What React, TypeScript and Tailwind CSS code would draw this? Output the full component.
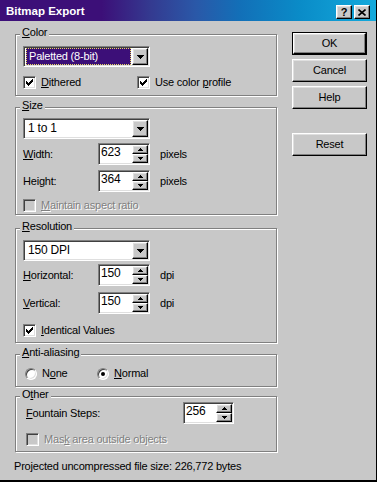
import type { ReactNode } from 'react';

const raised =
  'border border-t-white border-l-white border-r-black border-b-black shadow-[inset_-1px_-1px_0_#808080,inset_1px_1px_0_#dfdfdf] bg-[#c8c8c8]';
const sunken =
  'border border-t-[#808080] border-l-[#808080] border-r-white border-b-white shadow-[inset_1px_1px_0_#404040,inset_-1px_-1px_0_#dfdfdf]';
const dim = 'text-[#808080] [text-shadow:1px_1px_0_#fff]';

// classic 7x7 check glyph
const CHECK = ['......#', '.....##', '#...###', '##.###.', '#####..', '.###...', '..#....'];

function CheckMark() {
  return (
    <svg className="absolute left-[2px] top-[2px]" width="7" height="7" shapeRendering="crispEdges">
      {CHECK.map((row, y) =>
        row.split('').map((c, x) => (c === '#' ? <rect key={`${x}-${y}`} x={x} y={y} width="1" height="1" fill="#000" /> : null))
      )}
    </svg>
  );
}

function Checkbox({ checked, disabled, children }: { checked?: boolean; disabled?: boolean; children: ReactNode }) {
  return (
    <div className="flex items-center">
      <span className={`relative inline-block h-[13px] w-[13px] shrink-0 ${sunken} ${disabled ? 'bg-[#c8c8c8]' : 'bg-white'}`}>
        {checked && <CheckMark />}
      </span>
      <span className={`ml-[5px] ${disabled ? dim : ''}`}>{children}</span>
    </div>
  );
}

function Radio({ on, children }: { on?: boolean; children: ReactNode }) {
  return (
    <div className="flex items-center">
      <span className={`relative inline-block h-[12px] w-[12px] shrink-0 rounded-full bg-white ${sunken}`}>
        {on && <span className="absolute left-[3px] top-[3px] h-[4px] w-[4px] rounded-full bg-black" />}
      </span>
      <span className="ml-[5px]">{children}</span>
    </div>
  );
}

function Arrow() {
  return (
    <svg width="7" height="4" shapeRendering="crispEdges">
      <path d="M0 0h7v1h-7zM1 1h5v1h-5zM2 2h3v1h-3zM3 3h1v1h-1z" fill="#000" />
    </svg>
  );
}

function Combo({ text, focused }: { text: string; focused?: boolean }) {
  return (
    <div className={`flex h-[21px] w-[127px] bg-white p-[1px] ${sunken}`}>
      <div className="flex min-w-0 flex-1 items-center pl-[1px] pr-[1px]">
        {focused ? (
          <div className="flex h-[17px] w-full items-center border border-dotted border-[#e8d860] bg-[#3c0f78] pl-[2px] text-white">
            {text}
          </div>
        ) : (
          <span className="pl-[2px] text-[12px]">{text}</span>
        )}
      </div>
      <div className={`flex h-[17px] w-[16px] items-center justify-center ${raised}`}>
        <Arrow />
      </div>
    </div>
  );
}

function Spin({ value, w = 'w-[52px]' }: { value: string; w?: string }) {
  return (
    <div className={`flex h-[22px] ${w} bg-white p-[1px] ${sunken}`}>
      <div className="flex-1 pl-[1px] text-[12px] leading-[14px]">{value}</div>
      <div className="flex w-[16px] flex-col">
        <div className={`flex h-[9px] items-center justify-center ${raised}`}>
          <svg width="5" height="3" shapeRendering="crispEdges">
            <path d="M2 0h1v1h-1zM1 1h3v1h-3zM0 2h5v1h-5z" fill="#000" />
          </svg>
        </div>
        <div className={`flex h-[9px] items-center justify-center ${raised}`}>
          <svg width="5" height="3" shapeRendering="crispEdges">
            <path d="M0 0h5v1h-5zM1 1h3v1h-3zM2 2h1v1h-1z" fill="#000" />
          </svg>
        </div>
      </div>
    </div>
  );
}

function Group({ label, className, children }: { label: ReactNode; className: string; children: ReactNode }) {
  return (
    <div className={`relative border border-[#808080] shadow-[inset_1px_1px_0_#fff,1px_1px_0_#fff] ${className}`}>
      <span className="absolute -top-[9px] left-[4px] bg-[#c8c8c8] px-[2px] leading-[13px]">{label}</span>
      {children}
    </div>
  );
}

function Btn({ children, def, className = '' }: { children: ReactNode; def?: boolean; className?: string }) {
  if (def) {
    return (
      <div className={`h-[23px] w-[75px] border border-black ${className}`}>
        <div className={`flex h-full items-center justify-center ${raised}`}>{children}</div>
      </div>
    );
  }
  return <div className={`flex h-[23px] w-[75px] items-center justify-center ${raised} ${className}`}>{children}</div>;
}

export default function App() {
  return (
    <div className="flex h-[482px] w-[377px] flex-col border-b-2 border-r border-b-black border-r-black bg-[#c8c8c8] font-['Liberation_Sans',Arial,sans-serif] text-[11px] leading-[13px] tracking-[-0.2px] text-black">
      {/* Title bar */}
      <div className="flex h-[21px] shrink-0 items-start bg-[linear-gradient(90deg,#3c0f78_0%,#3c0f78_27%,#343a90_40%,#2a58a8_52%,#1270b8_64%,#0a8cc8_80%,#14aadc_100%)]">
        <span className="ml-[6px] text-[11.5px] font-bold leading-[22px] tracking-normal text-white">Bitmap Export</span>
        <div className="ml-auto mr-[6px] mt-[5px] flex gap-[2px]">
          <div className={`flex h-[14px] w-[16px] items-center justify-center text-[11px] font-bold leading-none ${raised}`}>?</div>
          <div className={`flex h-[14px] w-[16px] items-center justify-center ${raised}`}>
            <svg width="8" height="7" viewBox="0 0 8 7">
              <path d="M0.5 0.5 L7.5 6.5 M7.5 0.5 L0.5 6.5" stroke="#000" strokeWidth="1.6" />
            </svg>
          </div>
        </div>
      </div>

      <div className="flex">
        {/* Left column */}
        <div className="pl-[15px] pt-[13px]">
          <Group label={<><u>C</u>olor</>} className="h-[62px] w-[262px] pl-[7px] pt-[11px]">
            <Combo text="Paletted (8-bit)" focused />
            <div className="mt-[9px] flex">
              <div className="w-[114px]">
                <Checkbox checked>
                  <u>D</u>ithered
                </Checkbox>
              </div>
              <Checkbox checked>
                Use color <u>p</u>rofile
              </Checkbox>
            </div>
          </Group>

          <Group label={<><u>S</u>ize</>} className="mt-[11px] h-[108px] w-[262px] pl-[7px] pt-[10px]">
            <Combo text="1 to 1" />
            <div className="mt-[4px] flex items-center">
              <span className="w-[75px]">
                <u>W</u>idth:
              </span>
              <Spin value="623" />
              <span className="ml-[10px]">pixels</span>
            </div>
            <div className="mt-[5px] flex items-center">
              <span className="w-[75px]">Height:</span>
              <Spin value="364" />
              <span className="ml-[10px]">pixels</span>
            </div>
            <div className="mt-[7px]">
              <Checkbox disabled>
                <u>M</u>aintain aspect ratio
              </Checkbox>
            </div>
          </Group>

          <Group label={<><u>R</u>esolution</>} className="mt-[13px] h-[115px] w-[262px] pl-[7px] pt-[11px]">
            <Combo text="150 DPI" />
            <div className="mt-[3px] flex items-center">
              <span className="w-[75px]">
                <u>H</u>orizontal:
              </span>
              <Spin value="150" />
              <span className="ml-[10px]">dpi</span>
            </div>
            <div className="mt-[6px] flex items-center">
              <span className="w-[75px]">
                <u>V</u>ertical:
              </span>
              <Spin value="150" />
              <span className="ml-[10px]">dpi</span>
            </div>
            <div className="mt-[10px]">
              <Checkbox checked>
                <u>I</u>dentical Values
              </Checkbox>
            </div>
          </Group>

          <Group label={<><u>A</u>nti-aliasing</>} className="mt-[11px] h-[33px] w-[262px] pl-[9px] pt-[12px]">
            <div className="flex">
              <div className="w-[72px]">
                <Radio>
                  N<u>o</u>ne
                </Radio>
              </div>
              <Radio on>
                <u>N</u>ormal
              </Radio>
            </div>
          </Group>

          <Group label={<>O<u>t</u>her</>} className="mt-[9px] h-[56px] w-[262px] pl-[10px] pt-[5px]">
            <div className="flex items-center">
              <span className="w-[157px]">
                <u>F</u>ountain Steps:
              </span>
              <Spin value="256" w="w-[51px]" />
            </div>
            <div className="mt-[9px]">
              <Checkbox disabled>
                Mas<u>k</u> area outside objects
              </Checkbox>
            </div>
          </Group>

          <div className="-ml-px mt-[8px]">Projected uncompressed file size: 226,772 bytes</div>
        </div>

        {/* Buttons */}
        <div className="ml-[15px] flex flex-col pt-[11px]">
          <Btn def>OK</Btn>
          <Btn className="mt-[4px]">Cancel</Btn>
          <Btn className="mt-[4px]">Help</Btn>
          <Btn className="mt-[24px]">Reset</Btn>
        </div>
      </div>
    </div>
  );
}
